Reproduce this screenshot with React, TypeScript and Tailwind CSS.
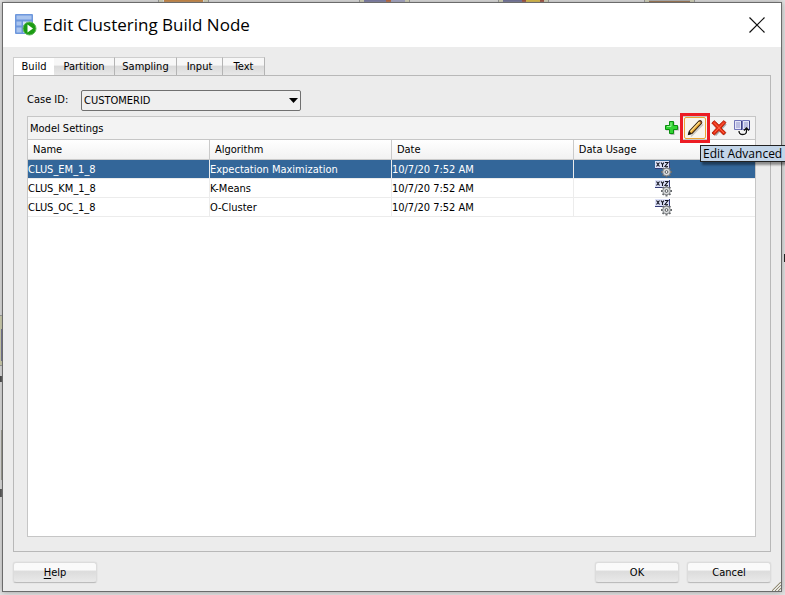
import React from "react";

const tabs = [
  { name: "Build", width: "w-[41px]" },
  { name: "Partition", width: "w-[61px]" },
  { name: "Sampling", width: "w-[62px]" },
  { name: "Input", width: "w-[46px]" },
  { name: "Text", width: "w-[42px]" },
];

const models = [
  { name: "CLUS_EM_1_8", algorithm: "Expectation Maximization", date: "10/7/20 7:52 AM" },
  { name: "CLUS_KM_1_8", algorithm: "K-Means", date: "10/7/20 7:52 AM" },
  { name: "CLUS_OC_1_8", algorithm: "O-Cluster", date: "10/7/20 7:52 AM" },
];

function NodeIcon() {
  return (
    <svg width="22" height="22" viewBox="0 0 22 22" aria-hidden="true">
      <rect x="0" y="0" width="18" height="20" rx="1" fill="#6d97dc" />
      <path d="M1.500 1.500h15v4h-15zM1.500 7.500h5v4h-5zM1.500 13.500h5v5h-5z" fill="#a9c4ee" />
      <path d="M8 7.500h8.500v4H8zM8 13.500h8.500v5H8z" fill="#d3e1f7" />
      <circle cx="14.500" cy="14.500" r="6.500" fill="#1c9c14" stroke="#63b75c" />
      <path d="M12.500 10.500v8l5.500-4z" fill="#fff" />
    </svg>
  );
}

function PlusIcon() {
  return (
    <svg width="16" height="16" viewBox="0 0 16 16" aria-hidden="true">
      <path d="M6.500 2h4v4.500H15v4h-4.500V15h-4v-4.500H2v-4h4.500z" fill="#777" opacity=".5" />
      <path d="M5.500 1.500h4v4h4v4h-4v4h-4v-4h-4v-4h4z" fill="#33d433" stroke="#0a8f10" />
      <path d="M7 2.500v4H3" fill="none" stroke="#9bf49b" />
    </svg>
  );
}

function PencilIcon() {
  return (
    <svg width="18" height="18" viewBox="0 0 18 18" aria-hidden="true">
      <path d="M5 17.500L17 5.500" stroke="#999" strokeWidth="1.200" opacity=".5" />
      <path d="M2.500 15.500l1-3.500L13 2q1.200-.8 2.200.2t.3 2.300L6 14.500z" fill="#eba62f" stroke="#3e2a14" strokeWidth="1.100" />
      <path d="M4.500 12.500L13.500 3" stroke="#ffe08a" strokeWidth="1.100" />
      <path d="M2 16l1-4 2.800 2.700z" fill="#1c1712" />
      <path d="M13 2q1.200-.8 2.200.2t.3 2.300z" fill="#7d4634" />
    </svg>
  );
}

function DeleteIcon() {
  return (
    <svg width="16" height="16" viewBox="0 0 16 16" aria-hidden="true">
      <path d="M4 3l10 11.500M14.500 3.500L4 15" stroke="#777" strokeWidth="3" opacity=".6" />
      <path d="M.8 3l2.500-2.300L8 5.200 12.700.7 15 2.500 10 8l4.800 4.500-2.300 2.400L8 10.400 3.300 15 1 13l4.500-5z" fill="#e92b12" stroke="#b5260f" />
      <path d="M3 2.500l10 10.500M13 2.500L3.500 12.500" stroke="#ff6a48" />
    </svg>
  );
}

function ColumnsIcon() {
  return (
    <svg width="16" height="16" viewBox="0 0 16 16" aria-hidden="true">
      <path d="M.5.500h7v9h-7zM8.500.500h7v9h-7z" fill="#e4e5f6" stroke="#7174b8" />
      <path d="M2 3h4M2 5h4M2 7h4M10 3h4M10 5h4M10 7h4" stroke="#9094cc" />
      <path d="M7.500 1v9M15.500 1v9" stroke="#3d3f80" />
      <path d="M5 11q0 3.500 3.800 3.500T12.500 11V9" fill="none" stroke="#fff" strokeWidth="3" />
      <path d="M5 11q0 3.500 3.800 3.500T12.500 11V8.500M10 10.500l2.500-2.500 2.500 2.500" fill="none" stroke="#111" strokeWidth="1.300" />
    </svg>
  );
}

function UsageIcon() {
  return (
    <svg className="mx-auto block" width="18" height="18" viewBox="0 0 18 18" role="img" aria-label="Data usage settings">
      <rect x="0" y="1" width="15" height="7" fill="#dde1f8" />
      <path d="M0 8.500h15M14.500 1v8" stroke="#343b78" />
      <path d="M1.500 2.500l3 4M4.500 2.500l-3 4M6 2.500l1.500 2 1.500-2M7.500 4.500v2.500M10 2.500h3l-3 4h3" fill="none" stroke="#10121f" strokeWidth="1.100" />
      <path d="M11.500 6.500v11M6 12h11M7.600 8.100l7.800 7.800M15.400 8.100l-7.800 7.800" stroke="#66696c" strokeWidth="2" />
      <circle cx="11.500" cy="12" r="3.800" fill="#dcdedf" stroke="#85888b" />
      <circle cx="11.500" cy="12" r="1.400" fill="#fff" stroke="#55585b" />
    </svg>
  );
}

function Canvas() {
  return (
    <div aria-hidden="true" className="absolute inset-0 overflow-hidden bg-[#e4e4e4]">
      <div className="absolute left-[158px] top-0 flex h-[3px] w-[51px] border-x border-[#888] bg-[#d8d8b4] px-1">
        <div className="flex-1 border-x border-dashed border-[#eee] bg-[#cb741b]" />
      </div>
      <div className="absolute left-[359px] top-0 flex h-[3px] w-[51px] border-x border-[#888] bg-[#d8d8b4] px-1">
        <div className="flex-1 bg-[#65659a]" />
        <div className="w-[5px] bg-[#b14b19]" />
        <div className="w-[14px] bg-[#9b9cc3]" />
      </div>
      <div className="absolute left-[498px] top-0 flex h-[3px] w-[51px] border-x border-[#888] bg-[#d8d8b4] px-1">
        <div className="flex-1 bg-[#58598b]" />
        <div className="w-[22px] border-x-4 border-[#932e18] bg-[#e1b71c]" />
      </div>
      <div className="absolute left-[644px] top-0 flex h-[2px] w-[51px] border-x border-[#888] bg-[#d8d8b4] px-1">
        <div className="flex-1 border-b border-[#8d511a] bg-[#aaa]" />
      </div>
      <div className="absolute left-0 top-[315px] h-[51px] w-1 border-y border-[#888] bg-[#d1d1a4]" />
      <div className="absolute left-[1px] top-[329px] h-8 w-1 bg-[#505080]" />
      <div className="absolute left-0 top-[376px] h-[6px] w-[2px] bg-[#222]" />
      <div className="absolute left-[1px] top-[430px] h-[50px] w-1 bg-[#8d8e7d]" />
      <div className="absolute left-0 top-[489px] h-2 w-[2px] bg-[#333]" />
      <div className="absolute right-0 top-[254px] h-2 w-px bg-black" />
    </div>
  );
}

const pushButton =
  "h-[21px] w-[84px] rounded-[3px] border border-[#dcdcdc] border-b-[#bcbcbc] bg-linear-to-b from-[#fafafa] from-35% via-[#dcdcdc] via-45% to-[#e9e9e9] text-center leading-[17px] shadow-[0_0_1px_#bbb]";

const headCell = "border-b border-[#cacaca] px-[5px] text-left font-normal";

export default function App() {
  return (
    <main className="relative h-screen min-h-[400px] overflow-hidden pt-[2px] pr-[3px] pb-[3px] pl-[2px] font-['DejaVu_Sans_Condensed','DejaVu_Sans',sans-serif] text-[11px] leading-[14px] text-black">
      <Canvas />
      <section
        role="dialog"
        aria-labelledby="dialog-title"
        className="relative flex h-full flex-col border border-[#6b6b6b] bg-[#ececec] shadow-[0_0_6px_#999]"
      >
        <header className="flex h-11 shrink-0 items-center bg-white pr-4 pl-3">
          <NodeIcon />
          <h1 id="dialog-title" className="ml-[6px] flex-1 font-['Open_Sans','Noto_Sans',sans-serif] text-[17px] leading-6">
            Edit Clustering Build Node
          </h1>
          <button type="button" aria-label="Close">
            <svg width="16" height="16" viewBox="0 0 16 16" aria-hidden="true">
              <path d="M.5.500l15 15M15.500.500l-15 15" stroke="#111" strokeWidth="1.200" />
            </svg>
          </button>
        </header>

        <div className="flex min-h-0 flex-1 flex-col px-[10px] pt-[10px]">
          <div role="tablist" className="flex h-[18px] shrink-0">
            {tabs.map((tab, index) => (
              <button
                key={tab.name}
                type="button"
                role="tab"
                aria-selected={index === 0}
                className={`${tab.width} border-t border-[#cecece] text-center leading-4 ${
                  index === 0
                    ? "border-l bg-white"
                    : "border-r border-r-[#b4b4b4] bg-linear-to-b from-[#f7f7f7] from-40% via-[#dadada] via-50% to-[#e8e8e8]"
                }`}
              >
                {tab.name}
              </button>
            ))}
          </div>

          <div role="tabpanel" aria-label="Build" className="flex min-h-0 flex-1 flex-col border border-[#b8b8b8] pt-[13px] pr-[14px] pb-[14px] pl-[13px]">
            <div className="flex h-[22px] shrink-0 items-center">
              <label htmlFor="case-id" className="w-[54px]">
                Case ID:
              </label>
              <div className="relative">
                <select
                  id="case-id"
                  defaultValue="CUSTOMERID"
                  className="block h-[21px] w-[220px] appearance-none rounded-[2px] border border-[#707070] bg-[#efefef] pt-px pr-5 pl-[2px]"
                >
                  <option>CUSTOMERID</option>
                </select>
                <svg className="pointer-events-none absolute top-2 right-[3px]" width="9" height="5" viewBox="0 0 9 5" aria-hidden="true">
                  <path d="M0 0h9L4.500 5z" fill="#000" />
                </svg>
              </div>
            </div>

            <div className="mt-[5px] flex min-h-0 flex-1 flex-col border border-[#c6c6c6] bg-white">
              <div className="flex h-[23px] shrink-0 items-center border-b border-[#c6c6c6] bg-[#f3f3f3] pr-[5px] pl-[2px]">
                <h2 className="flex-1 pt-px">Model Settings</h2>
                <div className="flex items-center">
                  <button type="button" aria-label="Add model">
                    <PlusIcon />
                  </button>
                  <button
                    type="button"
                    aria-label="Edit advanced settings"
                    className="relative mr-[5px] ml-1 flex h-[22px] w-[22px] items-center justify-center rounded-[2px] border border-[#eba432] bg-[#f8f5ee]"
                  >
                    <PencilIcon />
                    <span className="pointer-events-none absolute -inset-[5px] border-[3px] border-[#ec1c24]" />
                    <span
                      role="tooltip"
                      className="absolute top-[27px] left-[15px] z-10 h-[17px] border border-[#222] bg-[#c3d5e8] px-[2px] text-left font-['Open_Sans','Noto_Sans',sans-serif] text-[12px] leading-[15px] whitespace-nowrap shadow-[2px_3px_2px_rgba(0,0,0,0.4)]"
                    >
                      Edit Advanced Model Settings
                    </span>
                  </button>
                  <button type="button" aria-label="Delete model">
                    <DeleteIcon />
                  </button>
                  <button type="button" aria-label="Column mapping" className="ml-[7px]">
                    <ColumnsIcon />
                  </button>
                </div>
              </div>

              <table className="w-full table-fixed border-separate border-spacing-0">
                <colgroup>
                  <col className="w-[25.03%]" />
                  <col className="w-[25.03%]" />
                  <col className="w-[25.03%]" />
                  <col />
                </colgroup>
                <thead>
                  <tr className="h-5 bg-linear-to-b from-white to-[#f1f1f1]">
                    <th className={`${headCell} border-r`}>Name</th>
                    <th className={`${headCell} border-r`}>Algorithm</th>
                    <th className={`${headCell} border-r`}>Date</th>
                    <th className={headCell}>Data Usage</th>
                  </tr>
                </thead>
                <tbody>
                  {models.map((model, index) => (
                    <tr
                      key={model.name}
                      aria-selected={index === 0}
                      className={`h-[19px] [&>td]:border-b [&>td]:border-[#ececec] ${
                        index === 0 ? "bg-[#336699] text-white" : "bg-white"
                      }`}
                    >
                      <td className="border-r px-0 pt-[2px] pb-0">{model.name}</td>
                      <td className="border-r px-0 pt-[2px] pb-0">{model.algorithm}</td>
                      <td className="border-r px-0 pt-[2px] pb-0">{model.date}</td>
                      <td className="p-0">
                        <UsageIcon />
                      </td>
                    </tr>
                  ))}
                </tbody>
              </table>
            </div>
          </div>
        </div>

        <footer className="flex h-[39px] shrink-0 items-start px-[10px] pt-[10px]">
          <button type="button" className={pushButton}>
            <span className="underline underline-offset-2">H</span>elp
          </button>
          <div className="ml-auto flex gap-2">
            <button type="button" className={pushButton}>
              OK
            </button>
            <button type="button" className={pushButton}>
              Cancel
            </button>
          </div>
        </footer>
        <svg className="absolute right-0 bottom-0" width="9" height="9" viewBox="0 0 9 9" aria-hidden="true">
          <path d="M0 9L9 0M3 9l6-6M6 9l3-3" stroke="#918b72" strokeWidth="1.200" />
          <path d="M1.500 9L9 1.500M4.500 9L9 4.500" stroke="#fff" />
        </svg>
      </section>
    </main>
  );
}
